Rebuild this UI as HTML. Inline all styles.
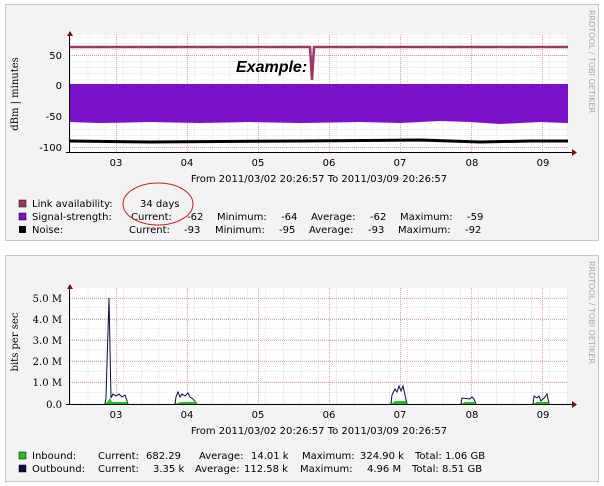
<!DOCTYPE html>
<html><head><style>
body{margin:0;background:#fff;width:604px;height:486px;overflow:hidden}
svg{display:block}
text{font-family:"DejaVu Sans","Liberation Sans",sans-serif;font-size:10px;fill:#000}
.s{font-family:"DejaVu Serif","Liberation Serif",serif}
</style></head><body>
<svg width="604" height="486" viewBox="0 0 604 486">
<defs>
<pattern id="g1" x="70" y="0" width="17.75" height="6.14" patternUnits="userSpaceOnUse">
<path d="M0 0V6.14M0 0H17.75" stroke="#c8c8c8" stroke-width="1" stroke-dasharray="1,1" fill="none"/>
</pattern>
<pattern id="g2" x="70" y="0" width="17.75" height="10.6" patternUnits="userSpaceOnUse">
<path d="M0 0V10.6M0 0H17.75" stroke="#c8c8c8" stroke-width="1" stroke-dasharray="1,1" fill="none"/>
</pattern>
</defs>
<rect x="5.5" y="4.5" width="593" height="236" fill="#f3f3f3" stroke="#c8c8c8"/>
<rect x="70" y="35" width="498" height="117" fill="#fff"/>
<rect x="70" y="35" width="498" height="117" fill="url(#g1)"/>
<g stroke="#e0a0a0" stroke-dasharray="1,1">
<path d="M116.5 35V152M187.5 35V152M258.5 35V152M329.5 35V152M400.5 35V152M471.5 35V152M542.5 35V152"/>
<path d="M70 55.5H568M70 85.5H568M70 116.5H568M70 147.5H568"/>
</g>
<path d="M70 84 H568 V123 L540 122 L500 124 L470 122 L440 121 L400 123 L360 122 L300 123 L250 122 L200 123 L150 122 L100 123 L70 122Z" fill="#7a10c8"/>
<path d="M70 141 L150 142 L300 141 L420 140 L480 142 L530 141 L568 141" stroke="#000" stroke-width="3" fill="none"/>
<path d="M70 47 H310 L312 80 L314 47 H568" stroke="#9a3a62" stroke-width="2.5" fill="none"/>
<path d="M69.5 152V32M66 152.5H572" stroke="#000" stroke-width="1"/>
<path d="M67 36 L70 31 L73 36Z M572 149 L577 152.5 L572 156Z" fill="#7a1010"/>
<text x="236" y="72" style="font-size:16px;font-style:italic;font-weight:bold;font-family:'Liberation Sans',sans-serif">Example:</text>
<g text-anchor="end">
<text x="62" y="59">50</text><text x="62" y="89">0</text><text x="62" y="120">-50</text><text x="62" y="151">-100</text>
</g>
<text class="s" transform="translate(18,94) rotate(-90)" text-anchor="middle" style="font-size:10px">dBm | minutes</text>
<g text-anchor="middle">
<text x="116" y="166">03</text><text x="187" y="166">04</text><text x="258" y="166">05</text><text x="329" y="166">06</text><text x="400" y="166">07</text><text x="472" y="166">08</text><text x="543" y="166">09</text>
<text x="319" y="182">From 2011/03/02 20:26:57 To 2011/03/09 20:26:57</text>
</g>
<text transform="translate(589,10) rotate(90)" style="font-size:8px;fill:#aaa">RRDTOOL / TOBI OETIKER</text>
<rect x="19" y="200" width="7" height="7" fill="#9a3a62" stroke="#000" stroke-width=".5"/>
<rect x="19" y="213" width="7" height="7" fill="#7a10c8" stroke="#000" stroke-width=".5"/>
<rect x="19" y="226" width="7" height="7" fill="#000"/>
<text x="32" y="207">Link availability:</text><text x="140" y="207">34 days</text>
<text x="32" y="220">Signal-strength:</text>
<text x="131" y="220">Current:</text><text x="187" y="220">-62</text><text x="217" y="220">Minimum:</text><text x="281" y="220">-64</text><text x="311" y="220">Average:</text><text x="370" y="220">-62</text><text x="400" y="220">Maximum:</text><text x="467" y="220">-59</text>
<text x="32" y="233">Noise:</text>
<text x="129" y="233">Current:</text><text x="184" y="233">-93</text><text x="215" y="233">Minimum:</text><text x="279" y="233">-95</text><text x="309" y="233">Average:</text><text x="368" y="233">-93</text><text x="398" y="233">Maximum:</text><text x="465" y="233">-92</text>
<ellipse cx="158" cy="204" rx="35" ry="21" fill="none" stroke="#d02020" stroke-width="1"/>
<rect x="5.5" y="255.5" width="593" height="226" fill="#f3f3f3" stroke="#c8c8c8"/>
<rect x="70" y="288" width="498" height="116" fill="#fff"/>
<rect x="70" y="288" width="498" height="116" fill="url(#g2)"/>
<g stroke="#e0a0a0" stroke-dasharray="1,1">
<path d="M116.5 288V404M187.5 288V404M258.5 288V404M329.5 288V404M400.5 288V404M471.5 288V404M542.5 288V404"/>
<path d="M70 298.5H568M70 319.5H568M70 340.5H568M70 361.5H568M70 382.5H568"/>
</g>
<path d="M105 404 L106 398 L109 298 L111 398 L113 394 L116 396 L119 394 L122 397 L125 395 L128 404Z M175 404 L176 397 L178 392 L180 397 L182 394 L185 396 L188 393 L190 397 L193 399 L197 404Z M391 404 L392 395 L395 389 L397 392 L399 386 L401 391 L403 386 L405 395 L407 404Z M461 404 L462 398 L470 399 L472 397 L474 399 L476 404Z M533 404 L534 396 L537 398 L539 396 L541 401 L545 397 L547 394 L549 404Z" fill="#fff" stroke="#0a0a4a" stroke-width="1"/>
<path d="M105 404 L108 401 L110 398 L112 402 L127 402 L128 404Z M176 404 L180 402 L196 402 L197 404Z M391 404 L395 401 L406 401 L407 404Z M462 404 L464 402 L475 402 L476 404Z M534 404 L536 402 L548 402 L549 404Z" fill="#20c020"/>
<path d="M69.5 404V285M66 404.5H572" stroke="#000" stroke-width="1"/>
<path d="M67 289 L70 284 L73 289Z M572 401 L577 404.5 L572 408Z" fill="#7a1010"/>
<g text-anchor="end">
<text class="s" x="62" y="302">5.0 M</text><text class="s" x="62" y="323">4.0 M</text><text class="s" x="62" y="344">3.0 M</text><text class="s" x="62" y="365">2.0 M</text><text class="s" x="62" y="386">1.0 M</text><text class="s" x="62" y="408">0.0</text>
</g>
<text class="s" transform="translate(18,342) rotate(-90)" text-anchor="middle">bits per sec</text>
<g text-anchor="middle">
<text x="116" y="418">03</text><text x="187" y="418">04</text><text x="258" y="418">05</text><text x="329" y="418">06</text><text x="400" y="418">07</text><text x="472" y="418">08</text><text x="543" y="418">09</text>
<text x="319" y="434">From 2011/03/02 20:26:57 To 2011/03/09 20:26:57</text>
</g>
<text transform="translate(589,261) rotate(90)" style="font-size:8px;fill:#aaa">RRDTOOL / TOBI OETIKER</text>
<rect x="19" y="452" width="7" height="7" fill="#20c020" stroke="#000" stroke-width=".5"/>
<rect x="19" y="465" width="7" height="7" fill="#0a0a4a" stroke="#000" stroke-width=".5"/>
<text x="32" y="459">Inbound:</text><text x="98" y="459">Current:</text><text x="146" y="459">682.29</text><text x="199" y="459">Average:</text><text x="251" y="459">14.01 k</text><text x="302" y="459">Maximum:</text><text x="360" y="459">324.90 k</text><text x="415" y="459">Total:</text><text x="445" y="459">1.06 GB</text>
<text x="32" y="472">Outbound:</text><text x="98" y="472">Current:</text><text x="153" y="472">3.35 k</text><text x="195" y="472">Average:</text><text x="244" y="472">112.58 k</text><text x="300" y="472">Maximum:</text><text x="367" y="472">4.96 M</text><text x="412" y="472">Total:</text><text x="442" y="472">8.51 GB</text>
</svg>
</body></html>
